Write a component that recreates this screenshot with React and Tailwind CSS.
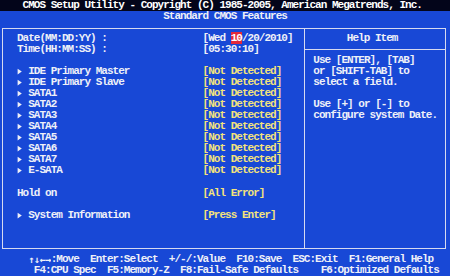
import React from "react";

const Tri = () => (
  <span className="inline-flex w-[11.25px] h-[11.04px] items-center align-top">
    <svg width="11.25" height="11.04" viewBox="0 0 11.25 11.04">
      <polygon points="0.6,2.8 4.8,5.6 0.6,8.4" fill="#eef0f8" />
    </svg>
  </span>
);

const Row = ({ label, value, arrow, valueClass }) => (
  <div className="flex h-[11.04px] whitespace-pre">
    <div className="w-[185.625px] shrink-0 flex">
      {arrow ? <Tri /> : null}
      <span>{label}</span>
    </div>
    <div className={valueClass || "text-[#f3e37c]"}>{value}</div>
  </div>
);

const Blank = () => <div className="h-[11.04px]" />;

export default function App() {
  const items = [
    "IDE Primary Master",
    "IDE Primary Slave",
    "SATA1",
    "SATA2",
    "SATA3",
    "SATA4",
    "SATA5",
    "SATA6",
    "SATA7",
    "E-SATA",
  ];
  return (
    <div className="w-[450px] h-[276px] overflow-hidden bg-[#1848d6] text-[#eef0f8] font-['Liberation_Mono',monospace] text-[11px] font-bold tracking-[-0.975px] leading-[11.04px]">
      <div className="h-[11.04px] bg-[#03051a] pl-[22.5px] whitespace-pre text-white">
        CMOS Setup Utility - Copyright (C) 1985-2005, American Megatrends, Inc.
      </div>
      <div className="h-[11.04px] pl-[163.125px] whitespace-pre">Standard CMOS Features</div>
      <div className="mt-[5.5px] ml-[2.3px] w-[444.2px] h-[221px] border border-[#d6daf0] flex">
        <div className="w-[302px] shrink-0 border-r border-[#d6daf0] pt-[4.5px] pl-[13.6px]">
          <div className="flex h-[11.04px] whitespace-pre">
            <div className="w-[185.625px] shrink-0">Date(MM:DD:YY) :</div>
            <div>
              {"[Wed "}
              <span className="bg-[#e3283a] text-white">10</span>
              {"/20/2010]"}
            </div>
          </div>
          <Row label="Time(HH:MM:SS) :" value="[05:30:10]" valueClass="text-[#eef0f8]" />
          <Blank />
          {items.map((t) => (
            <Row key={t} arrow label={t} value="[Not Detected]" />
          ))}
          <Blank />
          <Row label="Hold on" value="[All Error]" />
          <Blank />
          <Row arrow label="System Information" value="[Press Enter]" />
        </div>
        <div className="flex-1">
          <div className="pt-[4.5px] pb-[5px] border-b border-[#d6daf0]">
            <div className="h-[11.04px] pl-[41.5px] whitespace-pre">Help Item</div>
          </div>
          <div className="pt-[5px] pl-[8px] whitespace-pre">
            <div className="h-[11.04px]">Use [ENTER], [TAB]</div>
            <div className="h-[11.04px]">or [SHIFT-TAB] to</div>
            <div className="h-[11.04px]">select a field.</div>
            <div className="h-[11.04px]" />
            <div className="h-[11.04px]">Use [+] or [-] to</div>
            <div className="h-[11.04px]">configure system Date.</div>
          </div>
        </div>
      </div>
      <div className="mt-[5px] h-[11.04px] pl-[28.125px] whitespace-pre flex">
        <span className="block w-[22.5px] h-[11.04px] overflow-hidden text-[10px] tracking-[-0.395px] leading-[11.04px] font-['DejaVu_Sans_Mono',monospace]">{"↑↓←→"}</span>
        <span>{":Move  Enter:Select  +/-/:Value  F10:Save  ESC:Exit  F1:General Help"}</span>
      </div>
      <div className="h-[11.04px] pl-[33.75px] whitespace-pre">
        {"F4:CPU Spec  F5:Memory-Z  F8:Fail-Safe Defaults    F6:Optimized Defaults"}
      </div>
    </div>
  );
}
